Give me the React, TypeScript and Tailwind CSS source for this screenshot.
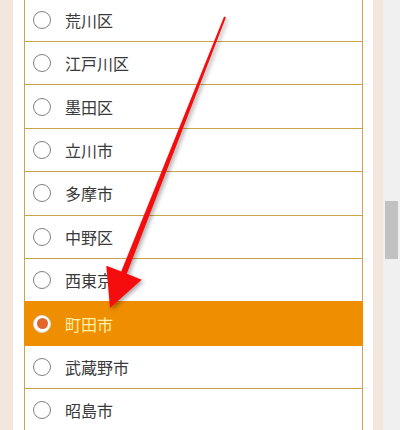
import React from "react";

const items = [
  "荒川区",
  "江戸川区",
  "墨田区",
  "立川市",
  "多摩市",
  "中野区",
  "西東京市",
  "町田市",
  "武蔵野市",
  "昭島市",
];
const SELECTED = 7;

export default function App() {
  return (
    <div
      className="relative flex w-[400px] h-[430px] overflow-hidden bg-white"
      style={{ fontFamily: '"Noto Sans CJK JP", "Noto Sans", sans-serif' }}
    >
      <div className="w-[13px] shrink-0 bg-[#f3e6dc]" />
      <div className="w-[360px] shrink-0 bg-white pl-[11px] pr-[10px]">
        <div className="-mt-[2.4px] flex flex-col">
          {items.map((name, i) => {
            const sel = i === SELECTED;
            const afterSel = i === SELECTED + 1;
            return (
              <div
                key={name}
                className={
                  "box-border h-[43.4px] shrink-0 flex items-center pl-[8px] border-x border-t " +
                  (sel
                    ? "bg-[#ef8e00] border-[#ef8e00]"
                    : afterSel
                    ? "bg-white border-x-[#c8a54c] border-t-[#ef8e00]"
                    : "bg-white border-[#c8a54c]")
                }
              >
                {sel ? (
                  <div className="w-[18px] h-[18px] rounded-full bg-white border border-[#d8d8d8] flex items-center justify-center">
                    <div className="w-[11px] h-[11px] rounded-full bg-[#e2652b]" />
                  </div>
                ) : (
                  <div className="w-[18px] h-[18px] rounded-full bg-white border border-[#808080]" />
                )}
                <span
                  className={
                    "ml-[14px] text-[16px] leading-none " +
                    (sel ? "text-[#fff0a8]" : "text-[#3a3a3a]")
                  }
                >
                  {name}
                </span>
              </div>
            );
          })}
        </div>
      </div>
      <div className="w-[10px] shrink-0 bg-[#f3e6dc]" />
      <div className="w-[17px] shrink-0 bg-[#f0f0f0] pt-[201px] pl-[2px]">
        <div className="w-[13px] h-[58px] bg-[#c1c1c1]" />
      </div>

      <svg
        className="absolute left-0 top-0 pointer-events-none"
        width="400"
        height="430"
        viewBox="0 0 400 430"
      >
        <defs>
          <filter id="sh" x="-20%" y="-20%" width="140%" height="140%">
            <feDropShadow dx="2" dy="2" stdDeviation="2" floodColor="#000" floodOpacity="0.35" />
          </filter>
        </defs>
        <polygon
          filter="url(#sh)"
          fill="#f50a0e"
          points="225.9,17.4 224.1,16.6 121.2,271.6 106.3,265.7 110,308 141.7,279.7 126.8,273.8"
        />
      </svg>
    </div>
  );
}
